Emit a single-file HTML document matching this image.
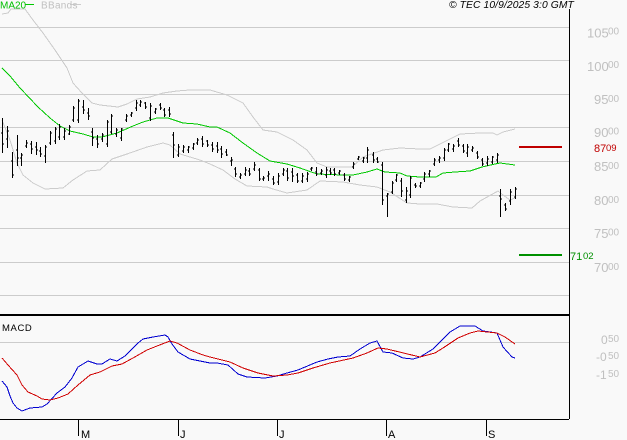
<!DOCTYPE html>
<html><head><meta charset="utf-8">
<style>
html,body{margin:0;padding:0;background:#f9f9f9}
body{width:627px;height:440px;overflow:hidden;position:relative}
svg{position:absolute;left:0;top:0}
text{font-family:"Liberation Sans",sans-serif}
</style></head><body>
<svg width="627" height="440" viewBox="0 0 627 440" shape-rendering="crispEdges">
<rect width="627" height="440" fill="#f9f9f9"/>
<path d="M0 27.5H569M0 60.5H569M0 94.5H569M0 127.5H569M0 161.5H569M0 195.5H569M0 228.5H569M0 262.5H569M0 295.5H569M0 342.5H569" stroke="#ccc" fill="none"/>
<path d="M569.5 9V419M0 419.5H569M78.5 419V436M178.5 419V436M277.5 419V436M386.5 419V436M486.5 419V436" stroke="#000" fill="none"/>
<path d="M0 315H569" stroke="#000" stroke-width="2" fill="none"/>
<g fill="none" stroke="#ccc">
<polyline points="2,14 8,13 11,9 25,9 33,20 43,33 55,50 67,68 73,83 82,93 92,103 100,105 118,107 127,104 137,99 150,97 163,93 177,91 190,90 210,90 227,95 243,103 253,117 263,130 277,132 293,140 307,150 317,163 327,167 352,167 363,157 383,150 400,148 420,149 430,149 440,144 448,140 460,134 480,133 493,133 497,135 503,132 515,129"/>
<polyline points="2,120 10,140 17,163 23,175 33,183 45,189 63,188 73,180 87,171 100,170 112,159 127,154 147,147 163,143 170,145 180,154 200,160 210,164 223,170 235,179 247,186 267,187 273,189 287,193 307,190 320,181 343,182 360,185 377,187 390,192 407,203 420,204 437,204 453,207 472,208 480,201 498,191 503,195 510,200 515,198"/>
</g>
<polyline fill="none" stroke="#00c800" points="2,68 10,76 20,88 38,107 50,118 60,126 70,131 83,134 93,137 102,137 117,133 133,126 143,122 157,118 168,118 183,123 197,124 210,127 217,127 230,133 243,143 257,153 270,161 287,164 300,168 317,174 343,175 353,175 367,172 377,169 385,172 400,173 407,176 420,177 436,177 443,173 455,172 470,171 482,167 495,164 500,163 515,165"/>
<path fill="none" stroke="#000" d="M2.5 118V153M1 133h1M3 144h1M7.5 126V148M6 139h1M8 131h1M12.5 152V178M11 161h1M13 175h1M17.5 135V166M16 150h1M18 158h1M21.5 153V166M20 158h1M22 155h1M26.5 140V148M25 146h1M27 143h1M31.5 141V154M30 144h1M32 149h1M36.5 142V155M35 147h1M37 150h1M40.5 147V157M39 151h1M41 154h1M45.5 145V163M44 156h1M46 147h1M50.5 131V145M49 143h1M51 133h1M55.5 127V144M54 141h1M56 129h1M59.5 124V140M58 137h1M60 127h1M64.5 128V140M63 137h1M65 131h1M69.5 125V135M68 134h1M70 127h1M73.5 106V122M72 120h1M74 108h1M78.5 99V123M77 120h1M79 101h1M83.5 100V114M82 107h1M84 110h1M88.5 108V120M87 113h1M89 116h1M92.5 128V146M91 132h1M93 138h1M97.5 135V148M96 139h1M98 144h1M102.5 133V142M101 139h1M103 135h1M107.5 120V147M106 144h1M108 122h1M111.5 114V134M110 132h1M112 116h1M116.5 128V137M115 134h1M117 130h1M121.5 128V141M120 138h1M122 129h1M126.5 114V122M125 120h1M127 116h1M131.5 112V117M130 115h1M132 113h1M136.5 100V111M135 108h1M137 103h1M140.5 100V107M139 105h1M141 102h1M145.5 102V109M144 103h1M146 107h1M150.5 103V121M149 118h1M151 106h1M155.5 108V114M154 112h1M156 109h1M160.5 103V110M159 105h1M161 108h1M164.5 108V117M163 110h1M165 115h1M169.5 107V117M168 110h1M170 114h1M173.5 132V158M172 135h1M174 145h1M178.5 144V157M177 155h1M179 147h1M183.5 145V153M182 151h1M184 147h1M188.5 146V153M187 150h1M189 147h1M193.5 143V150M192 148h1M194 144h1M197.5 138V145M196 143h1M198 140h1M202.5 136V147M201 139h1M203 144h1M207.5 140V147M206 141h1M208 145h1M212.5 142V152M211 145h1M213 149h1M217.5 142V153M216 146h1M218 150h1M221.5 146V158M220 149h1M222 154h1M226.5 149V156M225 152h1M227 155h1M231.5 157V166M230 161h1M232 160h1M235.5 167V177M234 169h1M236 174h1M240.5 173V179M239 177h1M241 175h1M245.5 167V176M244 174h1M246 170h1M249.5 168V176M248 171h1M250 174h1M254.5 162V171M253 169h1M255 165h1M259.5 168V181M258 170h1M260 179h1M263.5 176V181M262 179h1M264 178h1M268.5 171V181M267 176h1M269 174h1M273.5 176V185M272 179h1M274 183h1M278.5 173V185M277 182h1M279 176h1M283.5 168V176M282 174h1M284 170h1M287.5 168V181M286 171h1M288 178h1M292.5 168V182M291 172h1M293 176h1M297.5 173V183M296 175h1M298 181h1M302.5 173V183M301 181h1M303 176h1M307.5 172V182M306 179h1M308 174h1M311.5 167V171M310 169h1M312 168h1M316.5 167V176M315 172h1M317 174h1M321.5 169V175M320 173h1M322 171h1M326.5 167V178M325 175h1M327 170h1M330.5 168V175M329 171h1M331 173h1M334.5 168V176M333 170h1M335 174h1M339.5 170V175M338 173h1M340 171h1M344.5 173V181M343 175h1M345 179h1M349.5 176V182M348 180h1M350 177h1M353.5 162V169M352 167h1M354 164h1M358.5 156V160M357 159h1M359 157h1M363.5 157V163M362 161h1M364 158h1M367.5 147V163M366 158h1M368 150h1M373.5 152V163M372 155h1M374 160h1M377.5 157V163M376 159h1M378 162h1M382.5 162V205M381 165h1M383 200h1M387.5 193V217M386 196h1M388 194h1M392.5 181V194M391 192h1M393 183h1M396.5 174V182M395 180h1M397 175h1M401.5 178V197M400 181h1M402 191h1M406.5 187V203M405 200h1M407 191h1M410.5 176V198M409 195h1M411 178h1M415.5 183V188M414 185h1M416 186h1M420.5 182V188M419 186h1M421 183h1M424.5 172V182M423 179h1M425 174h1M429.5 170V177M428 174h1M430 171h1M434.5 158V166M433 164h1M435 160h1M439.5 156V163M438 160h1M440 158h1M444.5 148V161M443 158h1M445 150h1M448.5 143V152M447 150h1M449 144h1M453.5 144V152M452 149h1M454 146h1M458.5 138V147M457 141h1M459 145h1M463.5 144V153M462 146h1M464 151h1M467.5 144V157M466 153h1M468 147h1M472.5 146V152M471 150h1M473 148h1M477.5 151V159M476 153h1M478 157h1M482.5 158V166M481 160h1M483 164h1M487.5 156V166M486 163h1M488 159h1M492.5 156V164M491 162h1M493 157h1M497.5 153V163M496 160h1M498 155h1M500.5 189V217M499 196h1M501 199h1M505.5 203V211M504 205h1M506 209h1M510.5 189V205M509 201h1M511 192h1M515.5 187V199M514 197h1M516 189h1"/>
<rect x="25" y="4" width="9" height="1" fill="#00c800"/>
<rect x="70" y="4" width="11" height="1" fill="#ccc"/>
<rect x="519" y="146" width="43" height="2" fill="#c00000"/>
<rect x="519" y="254" width="43" height="2" fill="#009000"/>
<polyline fill="none" stroke="#0000d0" points="2,381 7,387 10,396 13,403 17,408 22,411 30,408 42,407 47,404 57,393 65,387 72,378 78,367 88,361 97,364 102,364 110,359 117,361 125,356 138,343 143,339 153,337 165,335 168,337 172,344 178,352 190,359 210,363 217,363 228,365 238,374 247,377 265,378 277,376 287,373 298,370 317,362 328,359 338,357 350,356 360,349 370,343 377,341 383,352 392,353 403,358 413,359 420,357 433,349 450,332 460,326 475,326 483,331 497,333 503,347 512,357 515,358"/>
<polyline fill="none" stroke="#d00000" points="2,358 8,365 17,375 22,385 28,392 37,396 42,399 50,400 58,398 68,394 78,385 90,375 100,372 112,366 122,364 133,358 147,350 157,346 170,341 177,343 190,350 203,355 210,357 230,362 243,368 258,373 273,376 287,375 298,373 313,368 330,363 353,358 367,353 378,348 387,349 420,357 435,353 443,348 458,338 470,333 478,331 497,333 505,337 515,344"/>
<g shape-rendering="auto">
<text x="0" y="8.5" font-size="10" fill="#00c000">MA20</text>
<text x="41" y="8.5" font-size="10" fill="#c0c0c0" letter-spacing=".3">BBands</text>
<text x="449" y="8" font-size="10.3" font-style="italic" fill="#000" letter-spacing=".1">© TEC 10/9/2025 3:0 GMT</text>
<text x="2" y="331" font-size="9.5" fill="#000" letter-spacing=".6">MACD</text>
<text x="81" y="438" font-size="11" fill="#000">M</text>
<text x="180" y="438" font-size="11" fill="#000">J</text>
<text x="279" y="438" font-size="11" fill="#000">J</text>
<text x="388" y="438" font-size="11" fill="#000">A</text>
<text x="488" y="438" font-size="11" fill="#000">S</text>
<g fill="#c0c0c0">
<text x="587" y="37.5" font-size="13">105</text><text x="608" y="34.5" font-size="10">00</text>
<text x="587" y="71" font-size="13">100</text><text x="608" y="68" font-size="10">00</text>
<text x="594" y="104" font-size="13">95</text><text x="608" y="102" font-size="10">00</text>
<text x="594" y="137" font-size="13">90</text><text x="608" y="134.5" font-size="10">00</text>
<text x="594" y="171" font-size="13">85</text><text x="608" y="169" font-size="10">00</text>
<text x="594" y="205" font-size="13">80</text><text x="608" y="203" font-size="10">00</text>
<text x="594" y="238" font-size="13">75</text><text x="608" y="235.5" font-size="10">00</text>
<text x="594" y="272" font-size="13">70</text><text x="608" y="270" font-size="10">00</text>
<text x="601" y="344" font-size="12">0</text><text x="608" y="342" font-size="10">50</text>
<text x="596" y="361" font-size="12">-0</text><text x="608" y="359" font-size="10">50</text>
<text x="596" y="379" font-size="12">-1</text><text x="608" y="377" font-size="10">50</text>
</g>
<text x="594" y="152" font-size="11" fill="#c00000">87</text><text x="606" y="151" font-size="9.5" fill="#c00000">09</text>
<text x="570" y="260" font-size="11" fill="#009000">71</text><text x="583" y="259" font-size="9.5" fill="#009000">02</text>
</g>
</svg>
</body></html>
